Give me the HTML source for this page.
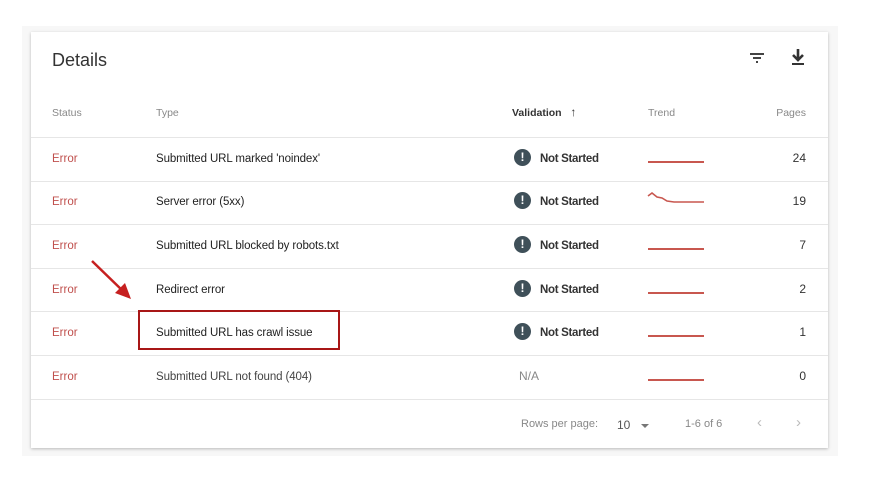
<!DOCTYPE html>
<html><head><style>
body{margin:0;width:887px;height:483px;background:#fff;position:relative;font-family:"Liberation Sans",sans-serif;overflow:hidden}
.bg{position:absolute;left:22px;top:26px;width:816px;height:430px;background:#f7f7f7}
.card{position:absolute;left:31px;top:32px;width:797px;height:416px;background:#fff;box-shadow:0 1px 3px rgba(0,0,0,.25)}
.t{position:absolute;white-space:nowrap}
.h{font-size:10.5px;color:#888;margin-top:1px}
.line{position:absolute;left:0;width:797px;height:1px;background:#e6e6e6}
.err{font-size:11.5px;color:#c0504d;margin-top:1.5px}
.ty{font-size:11.5px;color:#222;letter-spacing:-0.1px;margin-top:1.5px}
.ns{font-size:11.5px;color:#333;font-weight:bold;letter-spacing:-0.3px;margin-top:1.5px}
.ic{position:absolute;width:17px;height:17px;border-radius:50%;background:#3f5059;color:#fff;font-size:12px;font-weight:bold;text-align:center;line-height:17px}
.tr{position:absolute;height:2px;background:#c8574f;width:56px;left:617px}
.pg{font-size:12px;color:#333;right:22px}
</style></head><body>
<div class="bg"></div>
<div class="card">
<div class="t" style="left:21px;top:18px;font-size:18px;color:#333">Details</div>
<svg style="position:absolute;left:717px;top:17px" width="18" height="18"><path d="M2 5h14M5 9h8M8 13h2" stroke="#444" stroke-width="2"/></svg>
<svg style="position:absolute;left:758px;top:15px" width="18" height="20"><path d="M9 2v10M4 8l5 5 5-5" stroke="#333" stroke-width="2.6" fill="none"/><path d="M3 17h12" stroke="#333" stroke-width="2"/></svg>
<div class="t h" style="left:21px;top:74px">Status</div>
<div class="t h" style="left:125px;top:74px">Type</div>
<div class="t" style="left:481px;top:73px;font-size:10.5px;line-height:14px;color:#333;font-weight:bold">Validation &nbsp;&nbsp;<span style="font-size:12px;font-weight:bold">↑</span></div>
<div class="t h" style="left:617px;top:74px">Trend</div>
<div class="t h" style="right:22px;top:74px">Pages</div>
<div class="line" style="top:105px"></div>
<div class="line" style="top:149px"></div>
<div class="line" style="top:192px"></div>
<div class="line" style="top:236px"></div>
<div class="line" style="top:279px"></div>
<div class="line" style="top:323px"></div>
<div class="line" style="top:367px"></div>

<div class="t err" style="left:21px;top:119px">Error</div><div class="t ty" style="left:125px;top:119px">Submitted URL marked 'noindex'</div><div class="ic" style="left:483px;top:117px">!</div><div class="t ns" style="left:509px;top:119px">Not Started</div><div class="tr" style="top:129px"></div><div class="t pg" style="top:119px">24</div>

<div class="t err" style="left:21px;top:162px">Error</div><div class="t ty" style="left:125px;top:162px">Server error (5xx)</div><div class="ic" style="left:483px;top:160px">!</div><div class="t ns" style="left:509px;top:162px">Not Started</div>
<svg style="position:absolute;left:616px;top:158px" width="60" height="18"><path d="M1 6 L5 3 L10 7 L15 8 L20 11 L27 12 L57 12" stroke="#c8574f" stroke-width="1.6" fill="none"/></svg>
<div class="t pg" style="top:162px">19</div>

<div class="t err" style="left:21px;top:206px">Error</div><div class="t ty" style="left:125px;top:206px">Submitted URL blocked by robots.txt</div><div class="ic" style="left:483px;top:204px">!</div><div class="t ns" style="left:509px;top:206px">Not Started</div><div class="tr" style="top:216px"></div><div class="t pg" style="top:206px">7</div>

<div class="t err" style="left:21px;top:250px">Error</div><div class="t ty" style="left:125px;top:250px">Redirect error</div><div class="ic" style="left:483px;top:248px">!</div><div class="t ns" style="left:509px;top:250px">Not Started</div><div class="tr" style="top:260px"></div><div class="t pg" style="top:250px">2</div>

<div class="t err" style="left:21px;top:293px">Error</div><div class="t ty" style="left:125px;top:293px">Submitted URL has crawl issue</div><div class="ic" style="left:483px;top:291px">!</div><div class="t ns" style="left:509px;top:293px">Not Started</div><div class="tr" style="top:303px"></div><div class="t pg" style="top:293px">1</div>

<div class="t err" style="left:21px;top:337px">Error</div><div class="t ty" style="left:125px;top:337px;color:#444">Submitted URL not found (404)</div><div class="t" style="left:488px;top:337px;font-size:12px;color:#888">N/A</div><div class="tr" style="top:347px"></div><div class="t pg" style="top:337px">0</div>

<div class="t" style="left:490px;top:386px;font-size:11px;color:#888">Rows per page:</div>
<div class="t" style="left:586px;top:386px;font-size:12px;color:#555">10</div>
<svg style="position:absolute;left:609px;top:390px" width="10" height="8"><path d="M1 2h8l-4 4z" fill="#777"/></svg>
<div class="t" style="left:654px;top:386px;font-size:11px;color:#888">1-6 of 6</div>
<div class="t" style="left:726px;top:382px;font-size:15px;color:#bbb">‹</div>
<div class="t" style="left:765px;top:382px;font-size:15px;color:#bbb">›</div>
</div>
<div style="position:absolute;left:138px;top:310px;width:198px;height:36px;border:2px solid #a81616"></div>
<svg style="position:absolute;left:85px;top:255px" width="55" height="50"><path d="M7 6 L40 38" stroke="#c62020" stroke-width="2.5"/><path d="M46 44 L30 38 L40 28 Z" fill="#c62020"/></svg>
</body></html>
